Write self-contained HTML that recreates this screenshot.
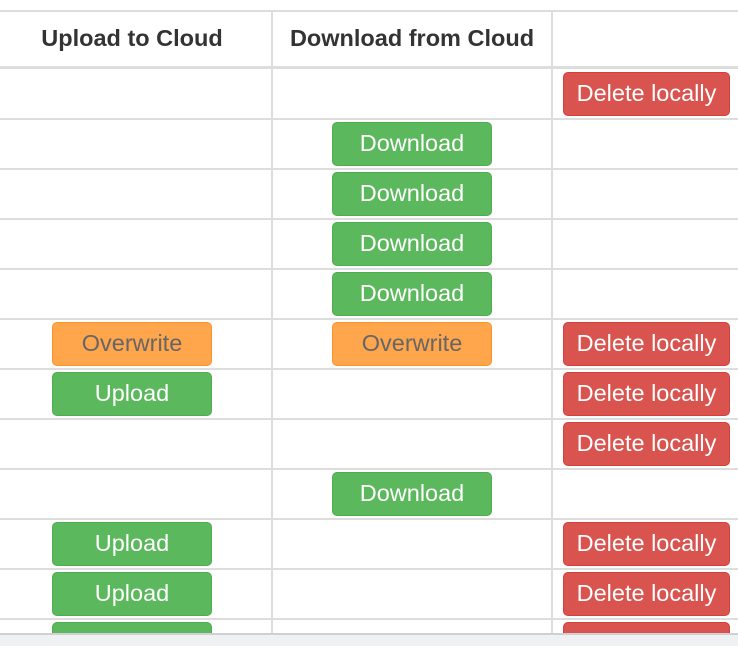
<!DOCTYPE html>
<html><head><style>
html,body{margin:0;width:738px;height:646px;overflow:hidden;background:#fff}
body{position:relative;font-family:"Liberation Sans",sans-serif}
.wrap{position:absolute;left:0;top:0;width:738px;height:633px;overflow:hidden}
.h{position:absolute;left:0;width:738px;background:#dddddd}
.v{position:absolute;width:2px;background:#dddddd;top:10px;height:623px}
.th{position:absolute;top:25px;font-weight:bold;font-size:23.5px;color:#333;text-align:center;white-space:nowrap}
.b{position:absolute;height:44px;box-sizing:border-box;border-radius:5px;font-size:23.5px;line-height:41px;text-align:center;color:#fff;white-space:nowrap}
.g{background:#5cb85c;border:1px solid #4cae4c}
.r{background:#d9534f;border:1px solid #d43f3a}
.o{background:#ffa54c;border:1px solid #f7932d;color:#666}
.c1{left:52px;width:160px}.c2{left:332px;width:160px}.c3{left:563px;width:167px}
.foot{position:absolute;left:0;top:633px;width:738px;height:13px;background:#f0f1f3;border-top:2px solid #cfd0d4;box-sizing:border-box;z-index:5}
</style></head><body>
<div class="wrap">
<div class="h" style="top:10px;height:2px"></div>
<div class="h" style="top:66px;height:3px"></div>
<div class="h" style="top:118px;height:2px"></div>
<div class="h" style="top:168px;height:2px"></div>
<div class="h" style="top:218px;height:2px"></div>
<div class="h" style="top:268px;height:2px"></div>
<div class="h" style="top:318px;height:2px"></div>
<div class="h" style="top:368px;height:2px"></div>
<div class="h" style="top:418px;height:2px"></div>
<div class="h" style="top:468px;height:2px"></div>
<div class="h" style="top:518px;height:2px"></div>
<div class="h" style="top:568px;height:2px"></div>
<div class="h" style="top:618px;height:2px"></div>
<div class="v" style="left:271px"></div>
<div class="v" style="left:551px"></div>
<div class="th" style="left:0;width:264px">Upload to Cloud</div>
<div class="th" style="left:272px;width:280px">Download from Cloud</div>

<div class="b r c3" style="top:72px">Delete locally</div>
<div class="b g c2" style="top:122px">Download</div>
<div class="b g c2" style="top:172px">Download</div>
<div class="b g c2" style="top:222px">Download</div>
<div class="b g c2" style="top:272px">Download</div>
<div class="b o c1" style="top:322px">Overwrite</div>
<div class="b o c2" style="top:322px">Overwrite</div>
<div class="b r c3" style="top:322px">Delete locally</div>
<div class="b g c1" style="top:372px">Upload</div>
<div class="b r c3" style="top:372px">Delete locally</div>
<div class="b r c3" style="top:422px">Delete locally</div>
<div class="b g c2" style="top:472px">Download</div>
<div class="b g c1" style="top:522px">Upload</div>
<div class="b r c3" style="top:522px">Delete locally</div>
<div class="b g c1" style="top:572px">Upload</div>
<div class="b r c3" style="top:572px">Delete locally</div>
<div class="b g c1" style="top:622px">Upload</div>
<div class="b r c3" style="top:622px">Delete locally</div>
</div>
<div class="foot"></div>
</body></html>
